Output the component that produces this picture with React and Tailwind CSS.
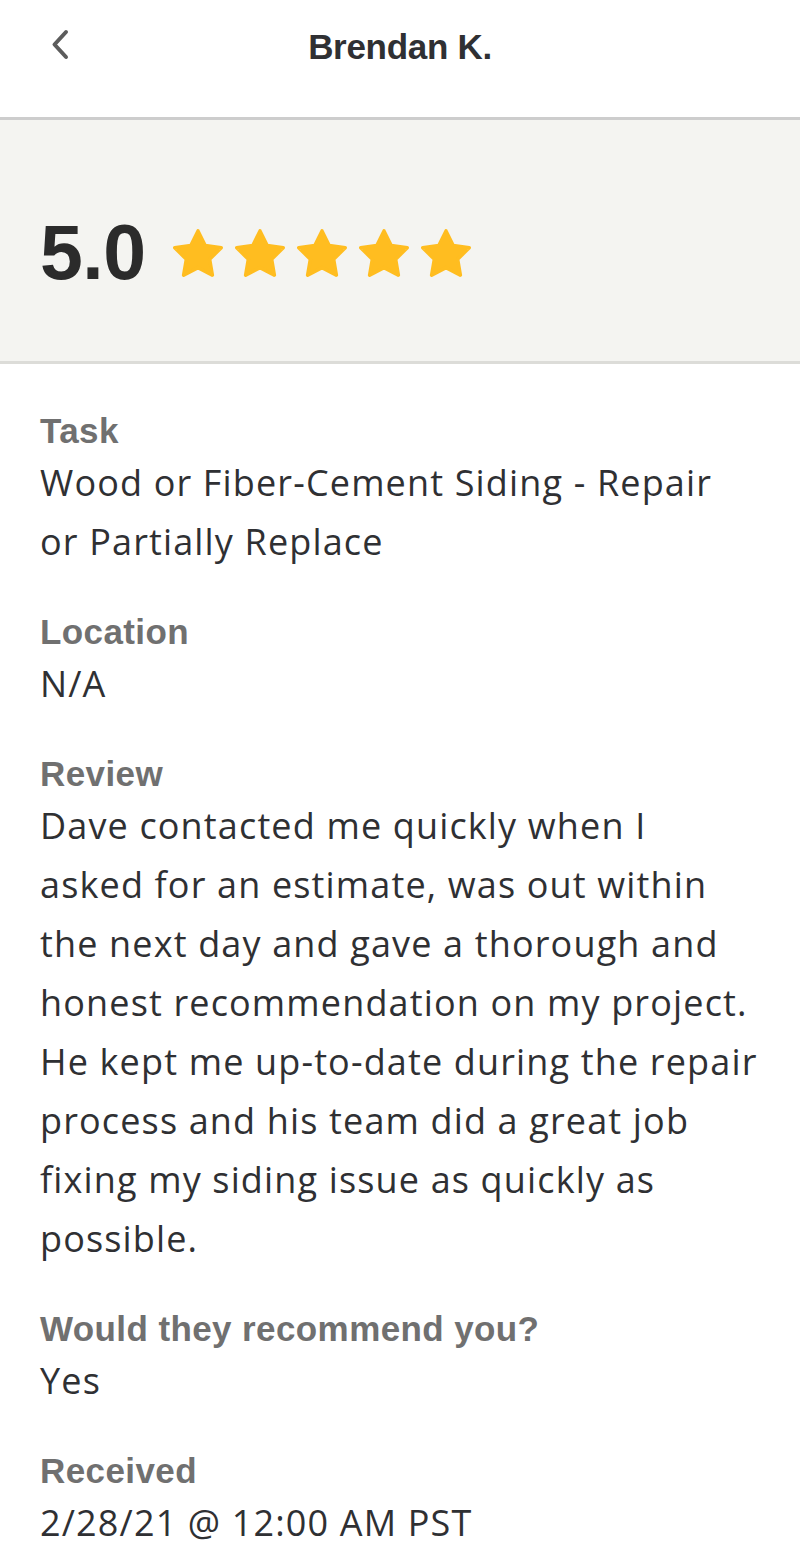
import React from "react";

function Star() {
  return (
    <svg width="50" height="48" viewBox="1.25 1.25 21.5 20.5" className="block">
      <path
        d="M12 2l3.09 6.26L22 9.27l-5 4.87 1.18 6.88L12 17.77l-6.18 3.25L7 14.14 2 9.27l6.91-1.01L12 2z"
        fill="#FFBD20"
        stroke="#FFBD20"
        strokeWidth="1.5"
        strokeLinejoin="round"
      />
    </svg>
  );
}

function Field({ label, children }) {
  return (
    <div className="flex flex-col">
      <div className="text-[35px] leading-[45px] font-bold text-[#707070] [font-family:'Liberation_Sans',sans-serif] tracking-[0.4px]">
        {label}
      </div>
      <div className="text-[36px] leading-[59px] text-[#2f3033] [font-family:'Open_Sans',sans-serif] tracking-[1.15px]">
        {children}
      </div>
    </div>
  );
}

export default function App() {
  return (
    <div className="w-[800px] min-h-[1568px] bg-white">
      <header className="grid grid-cols-[1fr_auto_1fr] h-[120px] border-b-[3px] border-[#cdcdcd]">
        <div className="flex items-start">
          <svg width="19" height="31" viewBox="0 0 19 31" className="mt-[29px] ml-[50px]">
            <path d="M16 3 L4.5 15.5 L16 28" fill="none" stroke="#5c5c5c" strokeWidth="4" strokeLinecap="round" strokeLinejoin="round" />
          </svg>
        </div>
        <h1 className="pt-[27px] text-[35px] leading-[40px] font-bold text-[#2f3033] [font-family:'Liberation_Sans',sans-serif] tracking-[-0.3px]">
          Brendan K.
        </h1>
        <div />
      </header>

      <section className="h-[244px] bg-[#f4f4f1] border-b-[3px] border-[#dcdcd8] px-[40px] pt-[94px]">
        <div className="flex items-center">
          <span className="text-[77px] leading-[77px] font-bold text-[#2b2b2b] [font-family:'Liberation_Sans',sans-serif] tracking-[-0.5px]">
            5.0
          </span>
          <div className="flex gap-[12px] ml-[27px]">
            <Star />
            <Star />
            <Star />
            <Star />
            <Star />
          </div>
        </div>
      </section>

      <main className="flex flex-col gap-[38px] px-[40px] pt-[44px] pb-[40px]">
        <Field label="Task">
          Wood or Fiber-Cement Siding - Repair
          <br />
          or Partially Replace
        </Field>
        <Field label="Location">N/A</Field>
        <Field label="Review">
          Dave contacted me quickly when I<br />
          asked for an estimate, was out within<br />
          the next day and gave a thorough and<br />
          honest recommendation on my project.<br />
          He kept me up-to-date during the repair<br />
          process and his team did a great job<br />
          fixing my siding issue as quickly as<br />
          possible.
        </Field>
        <Field label="Would they recommend you?">Yes</Field>
        <Field label="Received">2/28/21 @ 12:00 AM PST</Field>
      </main>
    </div>
  );
}
